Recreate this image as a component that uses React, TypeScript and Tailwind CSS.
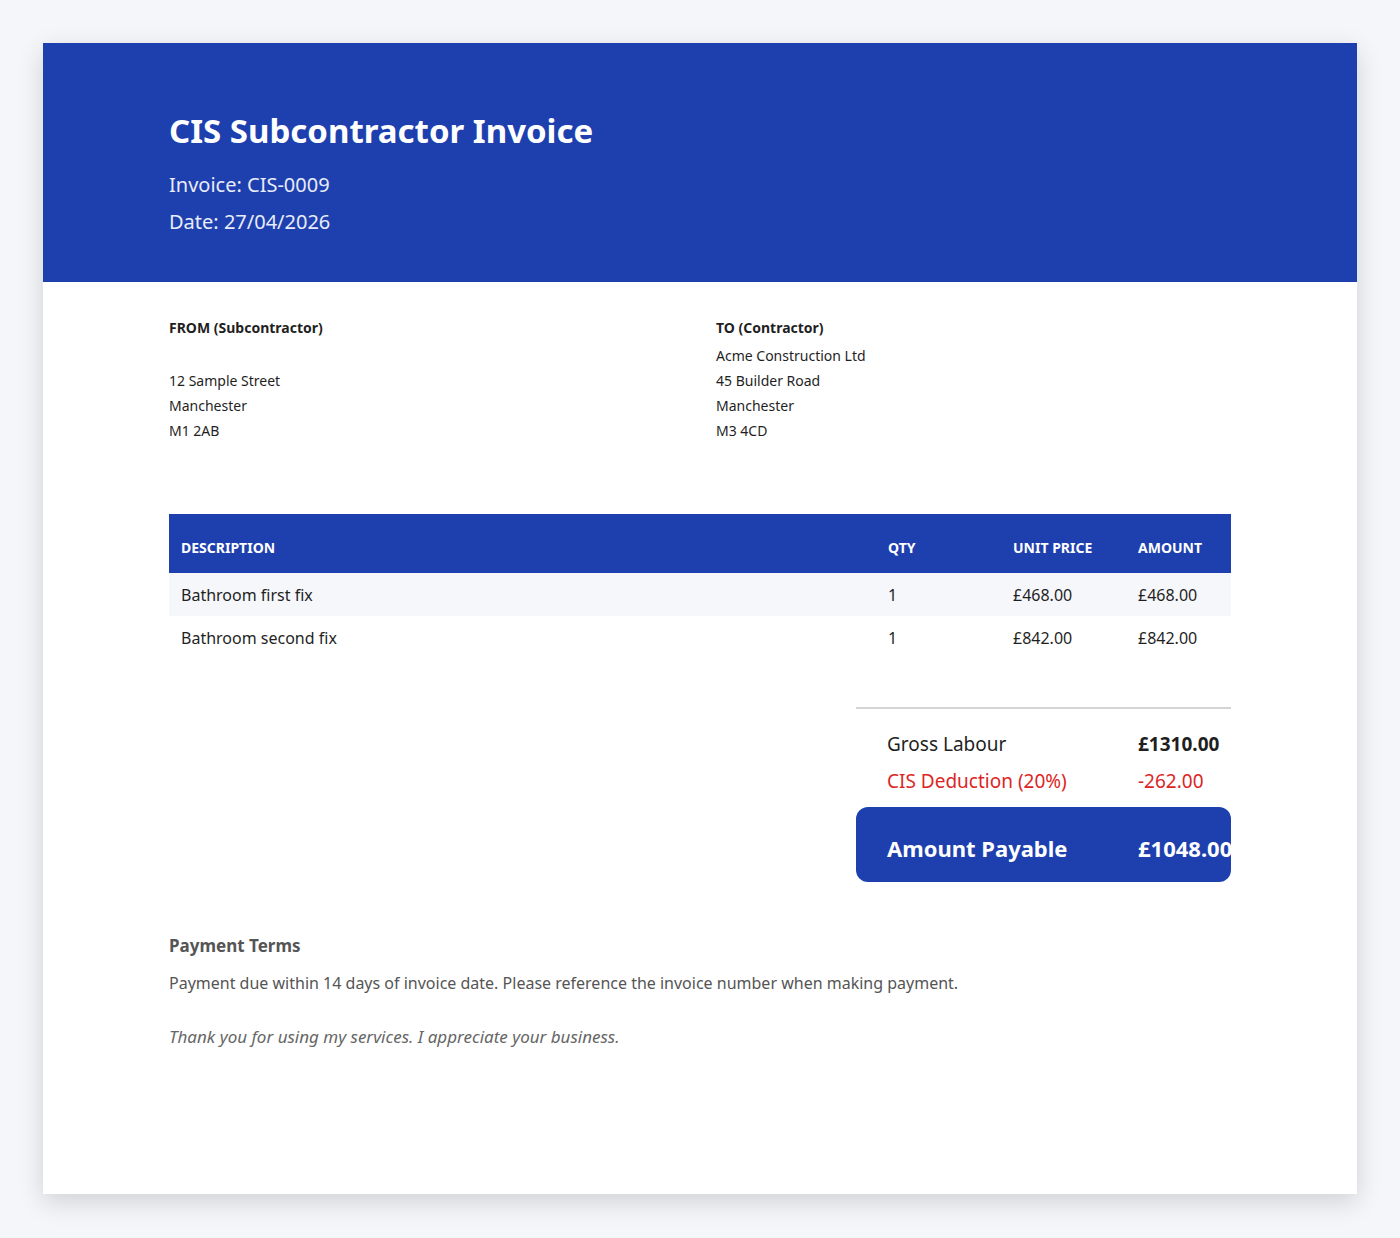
export default function App() {
  const items = [
    { desc: 'Bathroom first fix', qty: 1, price: '£468.00', amount: '£468.00' },
    { desc: 'Bathroom second fix', qty: 1, price: '£842.00', amount: '£842.00' },
  ];

  return (
    <div className="min-h-[1238px] bg-[#f5f6fa] p-[43px] font-[family-name:'Liberation_Sans',Arial,sans-serif] text-[#1f1f1f]">
      <div className="bg-white shadow-[0_8px_24px_rgba(0,0,0,0.15)] h-[1151px] overflow-hidden">
        <div className="bg-[#1e40af] text-white px-[126px] pt-[66px] pb-[42px]">
          <h1 className="text-[33px] font-bold leading-[44px]">CIS Subcontractor Invoice</h1>
          <div className="mt-[13px] text-[20px] leading-[37px] text-[#e8ecf8]">
            <div>Invoice: CIS-0009</div>
            <div>Date: 27/04/2026</div>
          </div>
        </div>

        <div className="px-[126px] pt-[33px]">
          <div className="grid grid-cols-2 gap-[32px] text-[14px] leading-[25px]">
            <div>
              <div className="font-bold mb-[3px]">FROM (Subcontractor)</div>
              <div className="h-[25px]"></div>
              <div>12 Sample Street</div>
              <div>Manchester</div>
              <div>M1 2AB</div>
            </div>
            <div>
              <div className="font-bold mb-[3px]">TO (Contractor)</div>
              <div>Acme Construction Ltd</div>
              <div>45 Builder Road</div>
              <div>Manchester</div>
              <div>M3 4CD</div>
            </div>
          </div>

          <div className="mt-[71px]">
            <div className="flex bg-[#1e40af] text-white text-[14px] font-bold h-[59px] items-end pb-[15px]">
              <div className="flex-1 pl-[12px]">DESCRIPTION</div>
              <div className="w-[125px]">QTY</div>
              <div className="w-[125px]">UNIT PRICE</div>
              <div className="w-[93px]">AMOUNT</div>
            </div>
            {items.map((it, i) => (
              <div key={i} className={`flex items-center h-[43px] text-[16px] ${i % 2 === 0 ? 'bg-[#f6f7fb]' : 'bg-white'}`}>
                <div className="flex-1 pl-[12px]">{it.desc}</div>
                <div className="w-[125px]">{it.qty}</div>
                <div className="w-[125px]">{it.price}</div>
                <div className="w-[93px]">{it.amount}</div>
              </div>
            ))}
          </div>

          <div className="flex justify-end mt-[48px]">
            <div className="w-[375px]">
              <div className="border-t-2 border-[#d4d4d4] pt-[17px]">
                <div className="flex items-center h-[37px] text-[19px]">
                  <div className="flex-1 pl-[31px]">Gross Labour</div>
                  <div className="w-[93px] font-bold whitespace-nowrap">£1310.00</div>
                </div>
                <div className="flex items-center h-[37px] text-[19px] text-[#dc2626]">
                  <div className="flex-1 pl-[31px]">CIS Deduction (20%)</div>
                  <div className="w-[93px] whitespace-nowrap">-262.00</div>
                </div>
              </div>
              <div className="mt-[7px] h-[75px] rounded-[12px] bg-[#1e40af] text-white flex items-center text-[22px] font-bold pt-[8px]">
                <div className="flex-1 pl-[31px]">Amount Payable</div>
                <div className="w-[93px] whitespace-nowrap">£1048.00</div>
              </div>
            </div>
          </div>

          <div className="mt-[51px] text-[#555]">
            <div className="text-[17px] font-bold">Payment Terms</div>
            <div className="text-[16px] mt-[12px]">Payment due within 14 days of invoice date. Please reference the invoice number when making payment.</div>
            <div className="text-[17px] italic mt-[29px] text-[#666]">Thank you for using my services. I appreciate your business.</div>
          </div>
        </div>
      </div>
    </div>
  );
}
